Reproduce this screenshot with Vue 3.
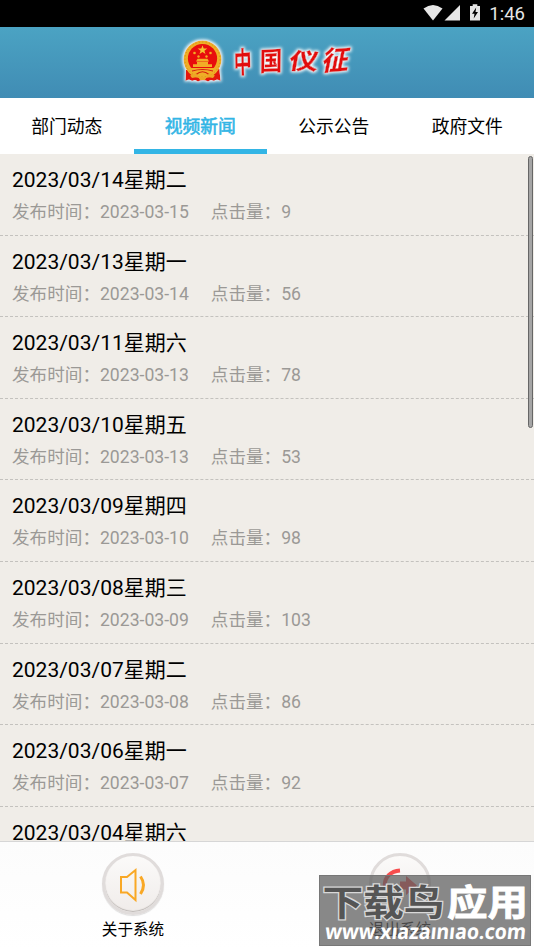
<script setup>
const tabs = ['部门动态', '视频新闻', '公示公告', '政府文件']
const news = [
  { title: '2023/03/14星期二', date: '2023-03-15', hits: 9 },
  { title: '2023/03/13星期一', date: '2023-03-14', hits: 56 },
  { title: '2023/03/11星期六', date: '2023-03-13', hits: 78 },
  { title: '2023/03/10星期五', date: '2023-03-13', hits: 53 },
  { title: '2023/03/09星期四', date: '2023-03-10', hits: 98 },
  { title: '2023/03/08星期三', date: '2023-03-09', hits: 103 },
  { title: '2023/03/07星期二', date: '2023-03-08', hits: 86 },
  { title: '2023/03/06星期一', date: '2023-03-07', hits: 92 },
  { title: '2023/03/04星期六' },
]
</script>

<template>
  <div class="screen">
    <div class="status">
      <svg width="58" height="27" viewBox="0 0 58 27" fill="#e6e6e6">
        <path d="M0.500 8.500Q10 1.500 19.500 8.500L10 20.500Z" />
        <path d="M37 5V20.500H21.500Z" />
        <path d="M47 6H49.700V4.300H54.300V6H57V20.500H47Z" />
        <path d="M53.200 7.500L49 13.800H51.500L50.700 18.500L55 12H52.500Z" fill="#000" />
      </svg>
      <span>1:46</span>
    </div>

    <header class="header">
      <svg class="brand" width="190" height="70" viewBox="0 0 190 70">
        <defs>
          <filter id="glow" x="-20%" y="-20%" width="140%" height="140%">
            <feMorphology in="SourceAlpha" operator="dilate" radius="0.800" />
            <feGaussianBlur stdDeviation="1.500" result="b" />
            <feFlood flood-color="#fff" />
            <feComposite in2="b" operator="in" result="g" />
            <feMerge><feMergeNode in="g" /><feMergeNode in="SourceGraphic" /></feMerge>
          </filter>
        </defs>
        <g filter="url(#glow)">
          <path d="M14 43L13.500 54Q17 51.500 20 54L23 53L26 54.500Q31 52 36 54.500L39 53L42 54Q45 51.500 48.500 54L47.500 42Z" fill="#e31208" />
          <circle cx="30.500" cy="32.500" r="19" fill="#efae27" />
          <circle cx="30.500" cy="32.500" r="17.500" fill="none" stroke="#d4921b" stroke-width="1" stroke-dasharray="1.200 2.200" />
          <circle cx="30.500" cy="31.500" r="14.600" fill="#e80d08" />
          <path d="M30.500 18.200L31.700 21.600H35.300L32.400 23.700L33.500 27.100L30.500 25L27.500 27.100L28.600 23.700L25.700 21.600H29.300Z" fill="#f5c333" />
          <g fill="#f2ad28">
            <circle cx="22.500" cy="26" r="1.300" /><circle cx="38.500" cy="26" r="1.300" />
            <circle cx="26.500" cy="29.500" r="1.200" /><circle cx="34.500" cy="29.500" r="1.200" />
            <path d="M25.500 31.800H35.500L37 34.500H24Z" />
            <path d="M25 34.800H36V37.300H40V40H21V37.300H25Z" />
            <path d="M18 41H43L41 46H20Z" />
          </g>
          <path d="M20 44Q30.500 41 41 44M24 47.500Q30.500 42 37 47.500" fill="none" stroke="#d52110" stroke-width="1.200" />
          <path d="M18 48.500L24 46.500L27 50H34L37 46.500L43 48.500L41 51L35 50L33 53H28L26 50L20 51Z" fill="#eda625" />
          <g class="calligraphy">
            <text transform="translate(62 46.500) rotate(-4) skewX(-3) scale(.66 1.080)">中</text>
            <text transform="translate(87.500 44) rotate(-3) skewX(-4) scale(.84 .96)">国</text>
            <text transform="translate(116 42) rotate(1) skewX(-9) scale(1.080 .84)">仪</text>
            <text transform="translate(149 44) rotate(-5) skewX(-16) scale(1 .98)">征</text>
          </g>
        </g>
      </svg>
    </header>

    <nav class="tabs">
      <div v-for="(tab, i) in tabs" :key="tab" class="tab" :class="{ active: i === 1 }">{{ tab }}</div>
    </nav>

    <main class="list">
      <article v-for="item in news" :key="item.title" class="row">
        <h2>{{ item.title }}</h2>
        <p v-if="item.date"><span>发布时间：{{ item.date }}</span><span>点击量：{{ item.hits }}</span></p>
      </article>
      <div class="scrollbar"></div>
    </main>

    <footer class="footer">
      <div class="action">
        <div class="round">
          <svg width="62" height="62" viewBox="0 0 62 62" fill="none" stroke="#f9a825">
            <path d="M19 24H25L33.500 17V47L25 39.500H19Z" stroke-width="2" />
            <path d="M38.500 23.500Q44.500 32 38.500 41" stroke-width="3" />
          </svg>
        </div>
        <span>关于系统</span>
      </div>
      <div class="action">
        <div class="round flat">
          <svg width="62" height="62" viewBox="0 0 62 62">
            <path d="M31 17.500C11 19 11 43 29 49" fill="none" stroke="#f64d4d" stroke-width="4" />
            <path d="M31 28.500H37V23L48 32.500L37 42V36.500H31Z" fill="#f64d4d" />
          </svg>
        </div>
        <span>退出系统</span>
      </div>
    </footer>

    <div class="watermark">
      <svg width="212" height="71" viewBox="0 0 212 71">
        <g class="mark">
          <text class="dark" x="3.500" y="41" textLength="122" lengthAdjust="spacingAndGlyphs">下载鸟</text>
          <text class="light" x="128" y="41" textLength="81" lengthAdjust="spacingAndGlyphs">应用</text>
        </g>
        <text class="url" transform="translate(5.500 64) skewX(-6)" textLength="201" lengthAdjust="spacingAndGlyphs">www.xıazaınıao.com</text>
      </svg>
    </div>
  </div>
</template>

<style>
body { margin: 0; overflow: hidden; }
</style>

<style scoped>
.screen {
  position: relative;
  width: 534px;
  height: 950px;
  display: flex;
  flex-direction: column;
  overflow: hidden;
  background: #fff;
  font-family: Roboto, "Noto Sans CJK SC", sans-serif;
  color: #000;
}
.status {
  height: 27px;
  flex: none;
  display: flex;
  justify-content: flex-end;
  align-items: center;
  box-sizing: border-box;
  gap: 8px;
  padding-right: 9px;
  background: #000;
  color: #e6e6e6;
  font-size: 18.500px;
}
.header {
  height: 71px;
  flex: none;
  display: flex;
  justify-content: center;
  background: linear-gradient(#4ba3c3, #408cb4);
}
.brand { display: block; }
.calligraphy text {
  font-family: "Noto Sans CJK SC", sans-serif;
  font-size: 27px;
  font-weight: 700;
  fill: #e20a0a;
  stroke: #e20a0a;
  stroke-width: .5px;
  stroke-linejoin: round;
}
.tabs { height: 56px; flex: none; display: flex; background: #fff; }
.tab {
  flex: 1;
  box-sizing: border-box;
  border-bottom: 5px solid transparent;
  padding-top: 2px;
  line-height: 53px;
  height: 56px;
  text-align: center;
  font-size: 17.800px;
}
.tab.active { color: #33b5e5; border-color: #33b5e5; -webkit-text-stroke: .6px #33b5e5; }
.list { position: relative; height: 687px; flex: none; overflow: hidden; background: #f0ede8; }
.row {
  height: 81.620px;
  box-sizing: border-box;
  padding: 10px 12px 0;
  border-bottom: 1px dashed #c4c2be;
}
h2 { margin: 0; height: 32px; line-height: 32px; font-size: 21px; font-weight: 400; }
p { margin: 0; display: flex; gap: 22px; height: 32px; line-height: 32px; font-size: 17.600px; color: #9b9996; }
.scrollbar {
  position: absolute;
  top: 2px;
  right: 1px;
  width: 5px;
  height: 272px;
  box-sizing: border-box;
  border: 1px solid #666;
  border-radius: 3px;
  background: #a5a5a5;
}
.footer {
  flex: 1;
  display: flex;
  border-top: 1px solid #d6d6d6;
  background: linear-gradient(#fcfcfc, #fff);
}
.action { flex: 1; display: flex; flex-direction: column; align-items: center; padding: 11px 1px 0 0; font-size: 15.600px; }
.action span { line-height: 24px; margin-top: 3px; }
.round {
  width: 62px;
  height: 62px;
  box-sizing: border-box;
  border: 3px solid #e0dcdb;
  border-radius: 50%;
  background: linear-gradient(#fbfaf9, #f0ecea);
  box-shadow: inset 0 -1px 1px #bbb6b3, 0 1px 1px #ddd;
}
.round svg { display: block; margin: -3px; }
.round.flat { box-shadow: none; }
.watermark { position: absolute; left: 319px; top: 875px; width: 212px; height: 71px; background: rgba(96, 96, 96, .75); box-shadow: inset 0 0 0 1px #777; }
.watermark svg { display: block; }
.mark text { font-family: "Noto Sans CJK SC", sans-serif; font-size: 36px; font-weight: 700; }
.dark { fill: #555; stroke: #d8d8d8; stroke-width: 2.500px; paint-order: stroke; }
.light { fill: #fff; stroke: #fff; stroke-width: .8px; }
.url { font-family: "Noto Sans", sans-serif; font-size: 21px; font-weight: 700; fill: #fff; }
</style>
